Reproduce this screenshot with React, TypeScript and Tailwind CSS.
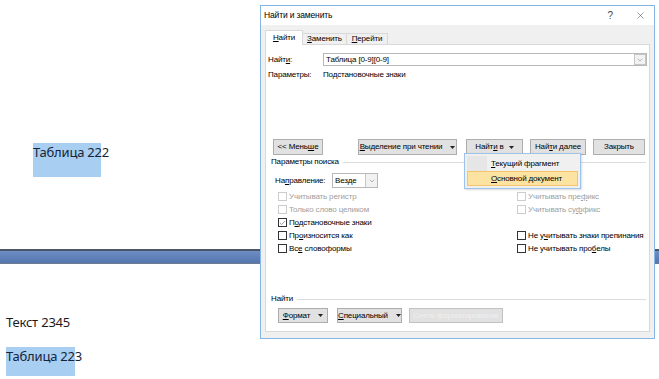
import { ChevronDown, X, Check } from "lucide-react";
import type { ReactNode } from "react";

function U({ children }: { children: ReactNode }) {
  return <span className="underline underline-offset-1">{children}</span>;
}

function Caret() {
  return (
    <svg width="5" height="3" viewBox="0 0 5 3" className="shrink-0">
      <path d="M0 0h5L2.5 3z" fill="#222" />
    </svg>
  );
}

function Btn({ children, className = "" }: { children: ReactNode; className?: string }) {
  return (
    <div className={`flex h-full shrink-0 items-center justify-center whitespace-nowrap border border-[#adadad] bg-[#e1e1e1] ${className}`}>
      {children}
    </div>
  );
}

function Box({ label, checked = false, disabled = false }: { label: ReactNode; checked?: boolean; disabled?: boolean }) {
  return (
    <div className={`flex h-[13px] items-center gap-[2px] whitespace-nowrap ${disabled ? "text-[#a0a0a0]" : "text-black"}`}>
      <div
        className={`flex h-[9px] w-[9px] items-center justify-center border bg-white ${
          disabled ? "border-[#cccccc]" : "border-[#333333]"
        }`}
      >
        {checked && <Check size={8} strokeWidth={1.5} color="#222" />}
      </div>
      <span>{label}</span>
    </div>
  );
}

function Section({ title }: { title: string }) {
  return (
    <div className="flex h-[12px] items-center gap-[4px] pl-[5px] pr-[3px]">
      <span>{title}</span>
      <div className="h-px flex-1 bg-[#dcdcdc]" />
    </div>
  );
}

export default function App() {
  return (
    <div className="relative h-[379px] w-[659px] overflow-hidden bg-white font-['Noto_Sans',sans-serif] text-[13px] text-[#1b1b1b]">
      {/* document */}
      <div className="flex flex-col pt-[143px]">
        <div className="relative ml-[33px] h-[34px] w-[68px] bg-[#a8cef2]">
          <span className="absolute left-0 top-[3px] whitespace-nowrap leading-[13px] tracking-[-0.2px] text-[#13253a]">Таблица 222</span>
        </div>
        <div className="mt-[72px] h-[15px] border-t-2 border-b border-t-[#4c5668] border-b-[#6d7b90] bg-gradient-to-b from-[#6c8ec4] to-[#5476ad]" />
        <div className="ml-[6px] mt-[52px] leading-[13px] tracking-[-0.2px]">Текст 2345</div>
        <div className="relative ml-[6px] mt-[18px] h-[29px] w-[69px] bg-[#a8cef2]">
          <span className="absolute left-0 top-[3px] whitespace-nowrap leading-[13px] tracking-[-0.2px] text-[#13253a]">Таблица 223</span>
        </div>
      </div>

      {/* dialog */}
      <div className="absolute left-[260px] top-[5px] flex h-[334px] w-[395px] flex-col border border-[#86b5e6] bg-[#f0f0f0] font-['Liberation_Sans',Arial,sans-serif] text-[8px] leading-none tracking-[-0.15px] text-black">
        <div className="flex h-[19px] items-center bg-white pl-[3px] text-[8.5px]">
          <span className="flex-1">Найти и заменить</span>
          <span className="mr-[22px] text-[10px] text-[#444]">?</span>
          <X size={11} strokeWidth={1} color="#333" className="mr-[8px]" />
        </div>

        <div className="flex flex-1 flex-col px-[4px] pb-[6px] pt-[5px]">
          <div className="flex h-[14px] items-end">
            <div className="relative z-10 -mb-px flex h-[15px] w-[38px] items-center justify-center border border-b-0 border-[#d9d9d9] bg-white">
              <span><U>Н</U>айти</span>
            </div>
            <div className="flex h-[11px] w-[44px] items-center justify-center border border-l-0 border-b-0 border-[#d9d9d9] bg-[#f0f0f0]">
              <span><U>З</U>аменить</span>
            </div>
            <div className="flex h-[11px] w-[41px] items-center justify-center border border-l-0 border-b-0 border-[#d9d9d9] bg-[#f0f0f0]">
              <span><U>П</U>ерейти</span>
            </div>
          </div>

          <div className="flex flex-1 flex-col border border-[#d9d9d9] bg-white">
            <div className="mt-[8px] flex h-[13px] items-center pl-[2px] pr-[2px]">
              <span className="w-[55px]">Найт<U>и</U>:</span>
              <div className="flex h-full flex-1 items-center border border-[#b8b8b8] bg-white pl-[2px]">
                <span className="flex-1">Таблица [0-9][0-9]</span>
                <div className="flex h-[11px] w-[12px] items-center justify-center border border-[#c6c6c6] bg-[#f2f2f2]">
                  <ChevronDown size={8} strokeWidth={1.2} color="#555" />
                </div>
              </div>
            </div>
            <div className="mt-[2px] flex h-[14px] items-center pl-[2px]">
              <span className="w-[55px]">Параметры:</span>
              <span>Подстановочные знаки</span>
            </div>

            <div className="mt-[57px] flex h-[16px] items-center pl-[7px]">
              <Btn className="w-[50px]">&lt;&lt; Мень<U>ш</U>е</Btn>
              <Btn className="ml-[35px] w-[99px] gap-[8px]">
                <span><U>В</U>ыделение при чтении</span>
                <Caret />
              </Btn>
              <Btn className="ml-[9px] w-[57px] gap-[5px] border-[#3c7fb1] bg-[#dde9f5]">
                <span>Найт<U>и</U> в</span>
                <Caret />
              </Btn>
              <Btn className="ml-[7px] w-[56px]">Най<U>т</U>и далее</Btn>
              <Btn className="ml-[7px] w-[52px]">Закрыть</Btn>
            </div>

            <div className="mt-[1px]">
              <Section title="Параметры поиска" />
            </div>

            <div className="mt-[5px] flex h-[15px] items-center pl-[9px]">
              <span className="w-[57px]">На<U>п</U>равление:</span>
              <div className="flex h-full w-[46px] items-center border border-[#b8b8b8] bg-white pl-[2px]">
                <span className="flex-1">Везде</span>
                <div className="flex h-full w-[12px] items-center justify-center border-l border-[#c6c6c6] bg-[#f2f2f2]">
                  <ChevronDown size={8} strokeWidth={1.2} color="#555" />
                </div>
              </div>
            </div>

            <div className="mt-[2px] flex pl-[12px]">
              <div className="flex w-[239px] flex-col">
                <Box label="Учитывать регистр" disabled />
                <Box label="Только слово целиком" disabled />
                <Box label={<>П<U>о</U>дстановочные знаки</>} checked />
                <Box label={<>Пр<U>о</U>износится как</>} />
                <Box label={<>Вс<U>е</U> словоформы</>} />
              </div>
              <div className="flex flex-col">
                <Box label={<>Учитывать пре<U>ф</U>икс</>} disabled />
                <Box label={<>Учитывать су<U>ф</U>фикс</>} disabled />
                <div className="h-[13px]" />
                <Box label={<>Не у<U>ч</U>итывать знаки препинания</>} />
                <Box label={<>Не учитывать про<U>б</U>елы</>} />
              </div>
            </div>

            <div className="mt-[38px]">
              <Section title="Найти" />
            </div>

            <div className="mt-[3px] flex h-[15px] items-center pl-[12px]">
              <Btn className="w-[50px] gap-[8px]">
                <span><U>Ф</U>ормат</span>
                <Caret />
              </Btn>
              <Btn className="ml-[9px] w-[65px] gap-[8px]">
                <span><U>С</U>пециальный</span>
                <Caret />
              </Btn>
              <Btn className="ml-[7px] w-[94px] border-[#c2c2c2] bg-[#c9c9c9] text-[#efefef]">Снять форматирование</Btn>
            </div>
          </div>
        </div>

        {/* dropdown of "Найти в" */}
        <div className="absolute left-[203px] top-[147px] z-20 flex h-[36px] w-[117px] flex-col border border-[#9dc3ea] bg-[#f0f0f0] p-[2px] shadow-[1px_1px_2px_rgba(0,0,0,0.15)]">
          <div className="flex h-[15px] items-center">
            <div className="h-full w-[20px] bg-[#e6e6e6]" />
            <span className="pl-[4px]"><U>Т</U>екущий фрагмент</span>
          </div>
          <div className="flex h-[15px] items-center border border-[#f3c46b] bg-[#fde3a2] pl-[23px]">
            <span><U>О</U>сновной документ</span>
          </div>
        </div>
      </div>
    </div>
  );
}
